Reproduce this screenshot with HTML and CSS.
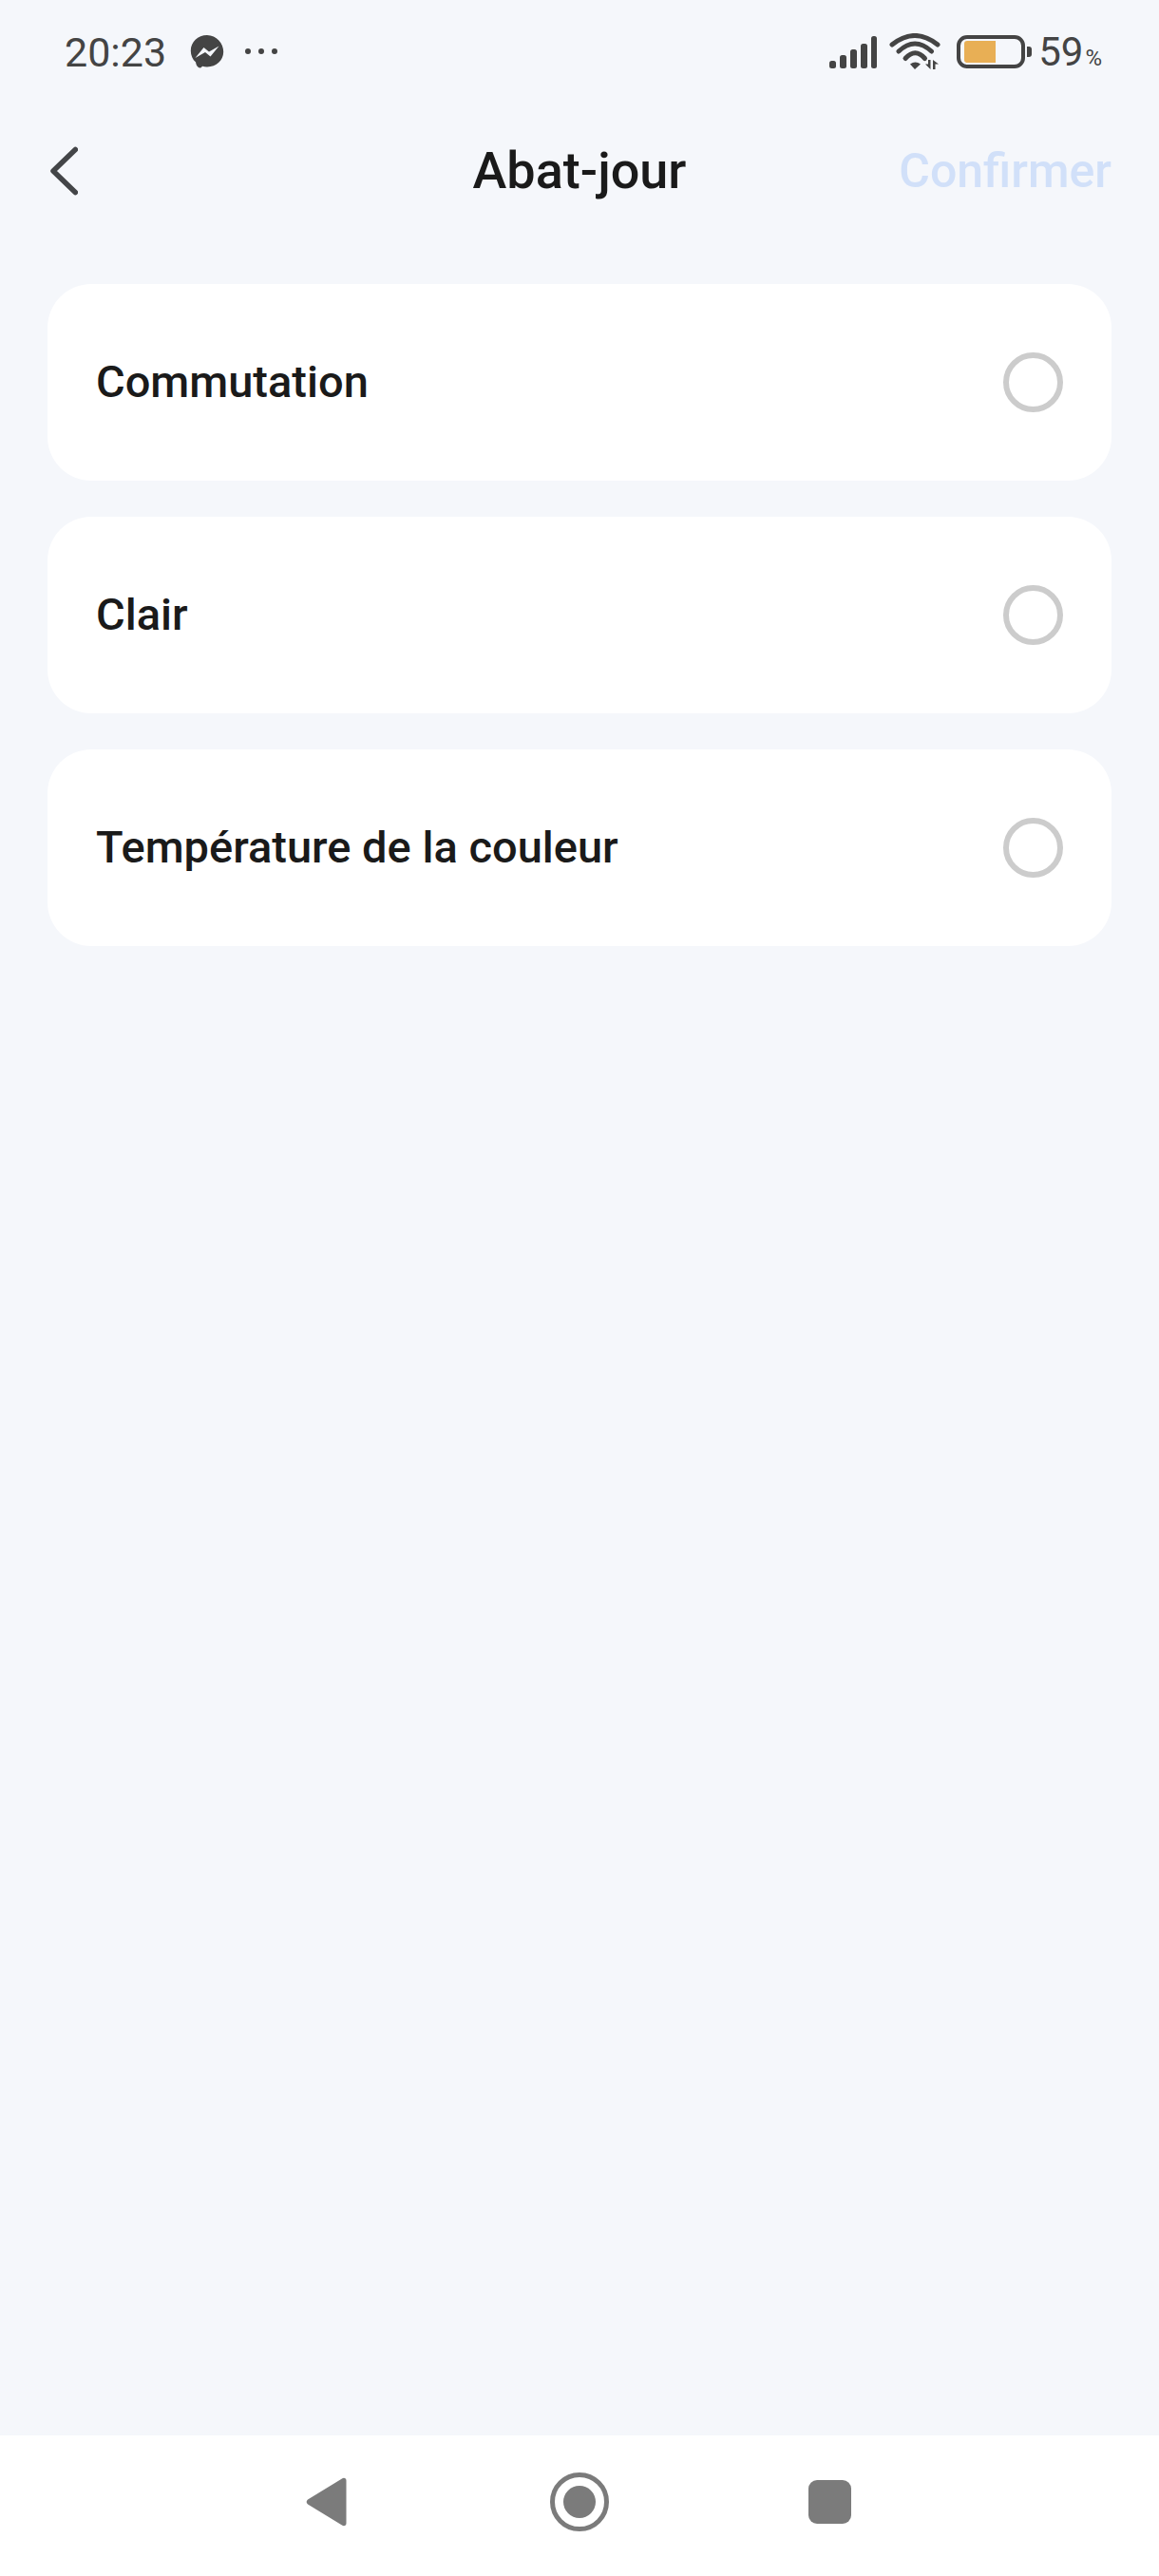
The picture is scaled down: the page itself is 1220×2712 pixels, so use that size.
FILE: index.html
```html
<!DOCTYPE html>
<html lang="fr">
<head>
<meta charset="utf-8">
<title>Abat-jour</title>
<link rel="stylesheet" href="styles.css">
</head>
<body>
<div class="phone">
  <div class="status">
    <div class="status-left">
      <span class="time">20:23</span>
      <svg class="msg" viewBox="0 0 36 36" width="36" height="37"><path fill="#444" d="M18 0.500C8.200 0.500 0.800 7.600 0.800 17c0 4.900 2 9.200 5.300 12.100 0 0 .4 5.900 5 5.900l2-1.700c1.600.4 3.200.6 4.900.6 9.800 0 17.200-7 17.200-15.900S27.800 0.500 18 0.500z"/><path fill="#f5f7fb" d="M5.500 24.500 14.500 13.500 20 18 30.500 12 21.500 23 16 18.500z"/></svg>
      <svg class="dots" viewBox="0 0 34 6" width="34" height="6"><circle cx="3" cy="3" r="3" fill="#444"/><circle cx="17" cy="3" r="3" fill="#444"/><circle cx="31" cy="3" r="3" fill="#444"/></svg>
    </div>
    <div class="status-right">
      <svg class="signal" viewBox="0 0 50 34" width="50" height="34"><g fill="#444"><rect x="0" y="26" width="7" height="8" rx="2.500"/><rect x="11" y="20" width="7" height="14" rx="2.500"/><rect x="22" y="14" width="7" height="20" rx="2.500"/><rect x="33" y="8" width="7" height="26" rx="2.500"/><rect x="44" y="0" width="6" height="34" rx="2.500"/></g></svg>
      <svg class="wifi" viewBox="0 0 54 38" width="54" height="38"><g fill="none" stroke="#444" stroke-width="5" stroke-linecap="round"><path d="M3 12Q27-7 51 12"/><path d="M10 19Q27 3 44.500 19"/><path d="M17 26.500Q27.500 15 37.500 26.500"/></g><path fill="#444" d="M22 32.500Q27.500 28.500 33 32.500L27 38z"/><path fill="#444" d="M41 28h2.500v10L38 32.500h3z M46 28v10h2.500v-5.500H52z"/></svg>
      <div class="battery"><div class="battery-body"><div class="battery-fill"></div></div><div class="battery-cap"></div></div>
      <span class="pct">59<small>%</small></span>
    </div>
  </div>

  <header class="topbar">
    <svg class="back" viewBox="0 0 32 52" width="32" height="52"><path d="M29.300 3.500 6 26l23.300 22.500" fill="none" stroke="#434548" stroke-width="5.500" stroke-linecap="round" stroke-linejoin="round"/></svg>
    <h1 class="title">Abat-jour</h1>
    <span class="confirm">Confirmer</span>
  </header>

  <main class="list">
    <div class="card"><span class="label">Commutation</span><span class="radio"></span></div>
    <div class="card"><span class="label">Clair</span><span class="radio"></span></div>
    <div class="card"><span class="label">Température de la couleur</span><span class="radio"></span></div>
  </main>

  <nav class="navbar">
    <svg class="nav-back" viewBox="0 0 43 52" width="43" height="52"><path fill="#7b7b7b" d="M38 1.500c2-1.500 4.500-0.500 4.500 2v45c0 2.500-2.500 3.500-4.500 2L2 28.500c-1.800-1.300-1.800-3.700 0-5z"/></svg>
    <svg class="nav-home" viewBox="0 0 62 62" width="62" height="62"><circle cx="31" cy="31" r="28.500" fill="none" stroke="#7b7b7b" stroke-width="5"/><circle cx="31" cy="31" r="17" fill="#7b7b7b"/></svg>
    <span class="nav-square"></span>
  </nav>
</div>
</body>
</html>
```
FILE: styles.css
```css
* { box-sizing: border-box; margin: 0; padding: 0; }
html, body { width: 1220px; height: 2712px; overflow: hidden; }
body { font-family: Roboto, "Liberation Sans", sans-serif; background: #f5f7fb; }
.phone { width: 1220px; height: 2712px; display: flex; flex-direction: column; background: #f5f7fb; }

.status { height: 140px; flex: none; display: flex; justify-content: space-between; align-items: flex-start; padding: 30px 60px 0 68px; color: #444; }
.status-left, .status-right { display: flex; align-items: center; height: 50px; }
.time { font-size: 43px; line-height: 50px; color: #444; }
.msg { margin-left: 25px; margin-top: -1px; }
.dots { margin-left: 22px; margin-top: -3px; }
.signal { margin-right: 13px; margin-top: -1px; }
.wifi { margin-right: 17px; margin-top: -2px; }
.battery { display: flex; align-items: center; margin-right: 7px; margin-top: -1px; }
.battery-body { width: 72px; height: 35px; border: 4px solid #444; border-radius: 11px; padding: 2px 4px; }
.battery-fill { width: 33px; height: 100%; background: #e8af55; border-radius: 3px 0 0 3px; }
.battery-cap { width: 5px; height: 11px; margin-left: 2px; background: #444; border-radius: 0 3px 3px 0; }
.pct { font-size: 42px; line-height: 50px; color: #444; white-space: nowrap; }
.pct small { font-size: 24px; line-height: 1; margin-left: 2px; }

.topbar { position: relative; height: 80px; flex: none; display: flex; align-items: center; justify-content: space-between; padding: 0 50px; }
.back { flex: none; }
.title { position: absolute; left: 0; right: 0; text-align: center; font-size: 54px; font-weight: 500; line-height: 80px; color: #1a1a1a; }
.confirm { position: relative; font-size: 50px; font-weight: 500; line-height: 80px; color: #d1e0f9; }

.list { flex: none; display: flex; flex-direction: column; gap: 38px; padding: 79px 50px 0; }
.card { height: 207px; background: #fff; border-radius: 46px; display: flex; align-items: center; justify-content: space-between; padding: 0 51px; }
.label { font-size: 47px; font-weight: 500; color: #1a1a1a; margin-bottom: 2px; }
.radio { width: 63px; height: 63px; border: 6px solid #cccccc; border-radius: 50%; }

.navbar { position: relative; margin-top: auto; height: 148px; flex: none; background: #fff; }
.nav-back { position: absolute; left: 322px; top: 44px; }
.nav-home { position: absolute; left: 579px; top: 39px; }
.nav-square { position: absolute; left: 851px; top: 47px; width: 45px; height: 46px; background: #7b7b7b; border-radius: 9px; }
```
